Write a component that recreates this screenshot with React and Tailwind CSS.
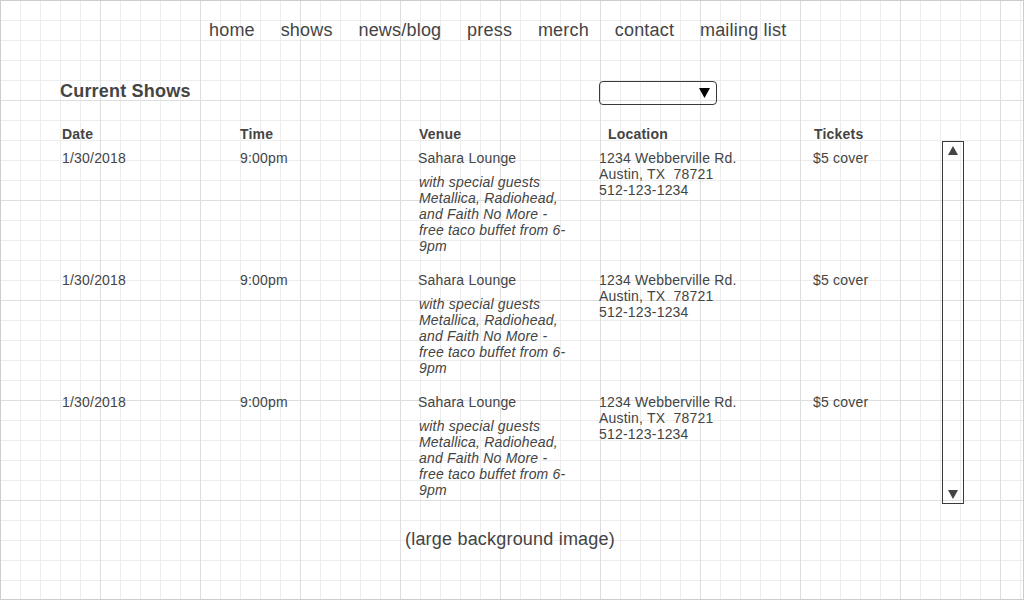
import React from "react";

const navLinks = ["home", "shows", "news/blog", "press", "merch", "contact", "mailing list"];

const shows = [
  { date: "1/30/2018", time: "9:00pm", venue: "Sahara Lounge" },
  { date: "1/30/2018", time: "9:00pm", venue: "Sahara Lounge" },
  { date: "1/30/2018", time: "9:00pm", venue: "Sahara Lounge" },
];

const Triangle = ({ down = false, className = "" }) => (
  <svg width="10" height="9" viewBox="0 0 10 9" className={className}>
    {down ? <path d="M0 0 H10 L5 9 Z" fill="currentColor" /> : <path d="M5 0 L10 9 H0 Z" fill="currentColor" />}
  </svg>
);

const ShowRow = ({ show }) => (
  <div className="grid grid-cols-[178px_178px_181px_214px_129px] text-[14px] leading-[16px]">
    <div>{show.date}</div>
    <div>{show.time}</div>
    <div>
      <div>{show.venue}</div>
      {/* line breaks kept explicit to match the wireframe */}
      <div className="mt-2 pl-[1px] italic">
        with special guests
        <br />
        Metallica, Radiohead,
        <br />
        and Faith No More -
        <br />
        free taco buffet from 6-
        <br />
        9pm
      </div>
    </div>
    <div>
      <div>1234 Webberville Rd.</div>
      <div className="whitespace-pre">Austin, TX  78721</div>
      <div>512-123-1234</div>
    </div>
    <div>$5 cover</div>
  </div>
);

const App = () => {
  return (
    <div className="w-[1025px] h-[601px] bg-white font-['Liberation_Sans',Arial,sans-serif] text-[#444] tracking-[0.2px]">
      <div className="w-[1024px] h-[600px] border border-[#cdcdcd] bg-origin-border bg-[linear-gradient(to_right,#dedede_1px,transparent_1px),linear-gradient(to_bottom,#dedede_1px,transparent_1px),linear-gradient(to_right,#ededed_1px,transparent_1px),linear-gradient(to_bottom,#ededed_1px,transparent_1px)] bg-[size:100px_100px,100px_100px,20px_20px,20px_20px]">
        {/* ===== Nav ===== */}
        <nav className="flex gap-[25.8px] pl-[208px] pt-[19px] text-[18px] leading-[20px]">
          {navLinks.map((link) => (
            <span key={link}>{link}</span>
          ))}
        </nav>

        {/* ===== Title + dropdown ===== */}
        <div className="mt-[41px] flex items-start pl-[59px]">
          <h2 className="w-[539px] text-[18px] leading-[20px] font-bold">Current Shows</h2>
          <div className="flex h-[24px] w-[118px] items-center justify-end rounded-[4px] border border-[#3a3a3a] pr-[6px]">
            <Triangle down className="text-black h-[10px] w-[11px]" />
          </div>
        </div>

        {/* ===== Shows table ===== */}
        <div className="mt-[21px] flex pl-[61px]">
          <div>
            <div className="grid grid-cols-[178px_178px_181px_214px_129px] text-[14px] leading-[16px] font-bold">
              <div>Date</div>
              <div>Time</div>
              <div className="pl-[1px]">Venue</div>
              <div className="pl-[9px]">Location</div>
              <div className="pl-[1px]">Tickets</div>
            </div>
            <div className="mt-[8px] flex flex-col gap-[18px]">
              {shows.map((show, i) => (
                <ShowRow key={i} show={show} />
              ))}
            </div>
          </div>
          <div className="mt-[15px] flex h-[363px] w-[22px] flex-col items-center justify-between border border-[#3a3a3a] pt-[4px] pb-[4px]">
            <Triangle />
            <Triangle down />
          </div>
        </div>

        <p className="mt-[25px] pl-[404px] text-[18px] leading-[20px]">(large background image)</p>
      </div>
    </div>
  );
};

export default App;
